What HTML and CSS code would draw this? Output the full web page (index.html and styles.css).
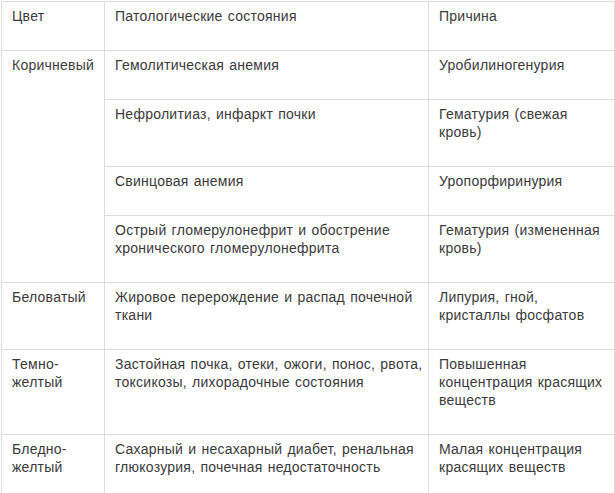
FILE: index.html
```html
<!DOCTYPE html>
<html lang="ru">
<head>
<meta charset="utf-8">
<title>Цвет мочи</title>
<link rel="stylesheet" href="styles.css">
</head>
<body>
<div class="page">
<table class="urine">
<colgroup>
<col class="c1">
<col class="c2">
<col class="c3">
</colgroup>
<tbody>
<tr><td>Цвет</td><td>Патологические состояния</td><td>Причина</td></tr>
<tr><td rowspan="4">Коричневый</td><td>Гемолитическая анемия</td><td>Уробилиногенурия</td></tr>
<tr><td>Нефролитиаз, инфаркт почки</td><td>Гематурия (свежая кровь)</td></tr>
<tr><td>Свинцовая анемия</td><td>Уропорфиринурия</td></tr>
<tr><td>Острый гломерулонефрит и обострение хронического гломерулонефрита</td><td>Гематурия (измененная кровь)</td></tr>
<tr><td>Беловатый</td><td>Жировое перерождение и распад почечной ткани</td><td>Липурия, гной, кристаллы фосфатов</td></tr>
<tr><td>Темно-желтый</td><td>Застойная почка, отеки, ожоги, понос, рвота, токсикозы, лихорадочные состояния</td><td>Повышенная концентрация красящих веществ</td></tr>
<tr><td>Бледно-желтый</td><td>Сахарный и несахарный диабет, ренальная глюкозурия, почечная недостаточность</td><td>Малая концентрация красящих веществ</td></tr>
</tbody>
</table>
</div>
</body>
</html>
```
FILE: styles.css
```css
html, body {
  margin: 0;
  padding: 0;
  background: #ffffff;
}
.page {
  padding: 1px 0 0 1px;
}
.urine {
  width: 613px;
  table-layout: fixed;
  border-collapse: collapse;
  font-family: "Liberation Sans", Arial, sans-serif;
  font-size: 14px;
  line-height: 18px;
  letter-spacing: 0.25px;
  word-spacing: 1px;
  color: #3a3a3a;
}
.c1 { width: 103px; }
.c2 { width: 324px; }
.c3 { width: 186px; }
.urine td {
  border: 1px solid #dcdcdc;
  padding: 5px 2px 25px 10px;
  vertical-align: top;
  text-align: left;
}
```
